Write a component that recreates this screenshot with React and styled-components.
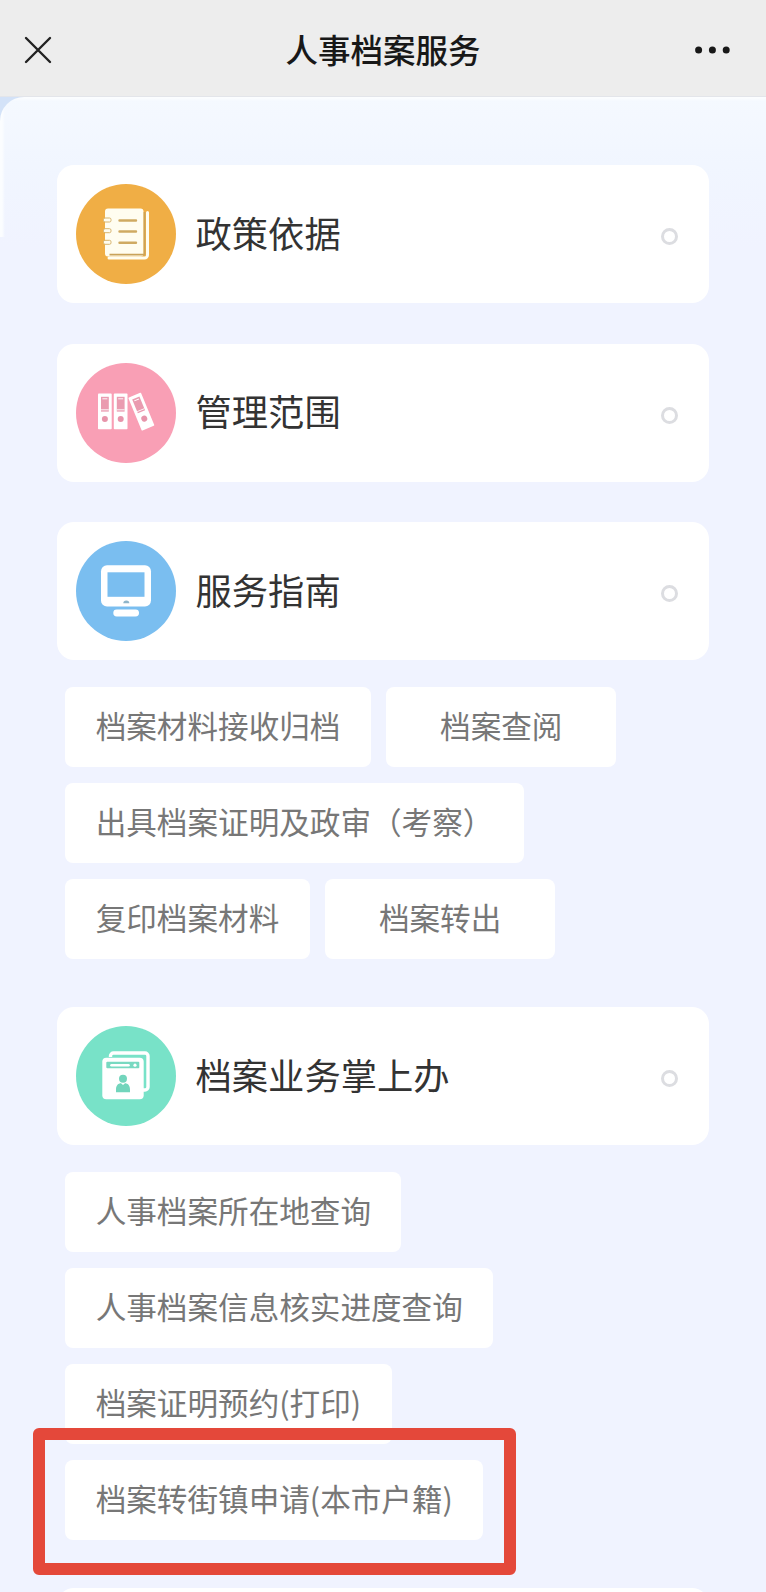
import React from "react";
import styled, { createGlobalStyle } from "styled-components";

const GlobalStyle = createGlobalStyle`
  * {
    box-sizing: border-box;
  }

  body {
    margin: 0;
    background-color: #f0f3ff;
    font-family: "Noto Sans CJK SC", sans-serif;
  }
`;

const StPage = styled.div`
  width: 766px;
  height: 1592px;
  overflow: hidden;
  background-color: #d3e2f8;
`;

const StHeader = styled.header`
  height: 97px;
  padding: 3px 36px 0 24px;
  display: grid;
  grid-template-columns: 1fr auto 1fr;
  align-items: center;
  background-color: #ededed;
  border-bottom: 1px solid #e3e5ea;
`;

const StHeaderTitle = styled.h1`
  margin: 0 -6px 0 6px;
  padding-bottom: 2px;
  font-size: 32.5px;
  font-weight: 500;
  line-height: 46px;
  color: #181818;
`;

const StHeaderButton = styled.button`
  padding: 0;
  display: flex;
  justify-self: ${({ $side }) => $side};
  border: none;
  background: none;
`;

const StContent = styled.main`
  height: 1495px;
  padding: 68.3px 57px 0;
  border-top-left-radius: 24px;
  background:
    linear-gradient(90deg, #fbfdff 2px, transparent) 0 0 / 5px 140px no-repeat,
    linear-gradient(#fbfdff 1px, transparent) 0 0 / 100% 4px no-repeat,
    linear-gradient(#f5f9ff 0, #f1f6ff 68px, #f0f3ff 150px);
`;

const StSection = styled.section`
  margin-bottom: ${({ $open }) => ($open ? "48px" : "40.4px")};
`;

const StCard = styled.div`
  height: 138px;
  padding: 0 31px 0 19px;
  display: flex;
  align-items: center;
  border-radius: 17px;
  background-color: #fff;
`;

const StCardIcon = styled.svg`
  width: 100px;
  height: 100px;
  flex-shrink: 0;
`;

const StCardTitle = styled.h2`
  margin: 0 auto 0 19.5px;
  padding-bottom: 5px;
  font-size: 36.3px;
  font-weight: 400;
  line-height: 54px;
  color: #333;
`;

const StRing = styled.span`
  width: 17px;
  height: 17px;
  margin-top: 5px;
  border: 3px solid #dcdde1;
  border-radius: 50%;
`;

const StTagList = styled.ul`
  margin: 26.8px 0 0;
  padding: 0 0 0 8.3px;
  display: flex;
  flex-wrap: wrap;
  gap: 15.6px;
  list-style: none;
`;

const StTag = styled.li`
  position: relative;
  min-width: 229.7px;
  height: 80.4px;
  padding: 0 30.4px 4.5px;
  display: flex;
  justify-content: center;
  align-items: center;
  border-radius: 8px;
  background-color: #fff;
  font-size: 30.6px;
  line-height: 44px;
  white-space: nowrap;
  color: #777;
`;

const StMark = styled.span`
  position: absolute;
  top: -32px;
  right: -32.5px;
  bottom: -34.5px;
  left: -32.3px;
  border: 12px solid #e4483a;
  border-radius: 6px;
`;

const NotebookIcon = () => (
  <StCardIcon viewBox="0 0 100 100">
    <circle cx="50" cy="50" r="50" fill="#f0ae45" />
    <path
      d="M71.5 28.5V71a3 3 0 0 1-3 3H33"
      fill="none"
      stroke="#fffdf0"
      strokeWidth="3"
      strokeLinecap="round"
    />
    <rect x="29" y="24.5" width="38.5" height="48" rx="3" fill="#fffdf0" />
    <path d="M68.5 28V70.7H33.5" fill="none" stroke="#c9a35a" strokeWidth="1.7" />
    <path
      d="M43.5 36.5H60M43.5 47.5H60M43.5 58.7H60"
      stroke="#cfaa62"
      strokeWidth="2.4"
      strokeLinecap="round"
    />
    <g fill="#fffdf0" stroke="#d7b46e" strokeWidth="1">
      <rect x="27.5" y="34" width="7.5" height="4" rx="1.5" />
      <rect x="27.5" y="44.7" width="7.5" height="4" rx="1.5" />
      <rect x="27.5" y="56.3" width="7.5" height="4" rx="1.5" />
    </g>
  </StCardIcon>
);

const Binder = ({ transform }) => (
  <g transform={transform}>
    <rect width="13.7" height="35.6" rx="0.8" fill="#fff" />
    <rect x="3" y="3.2" width="7.8" height="14.8" fill="#ea9bb0" />
    <path d="M4.4 5.2H9.4M3 16.2H10.8" stroke="#fff" strokeWidth="0.9" />
    <circle cx="6.9" cy="25.4" r="3" fill="#e794aa" />
  </g>
);

const BinderIcon = () => (
  <StCardIcon viewBox="0 0 100 100">
    <circle cx="50" cy="50" r="50" fill="#f99fb5" />
    <Binder transform="translate(22 30.6)" />
    <Binder transform="translate(37.8 30.6)" />
    <Binder transform="translate(52.2 34.8) rotate(-22.5)" />
  </StCardIcon>
);

const MonitorIcon = () => (
  <StCardIcon viewBox="0 0 100 100">
    <circle cx="50" cy="50" r="50" fill="#7abef0" />
    <rect x="25" y="24.3" width="50" height="41.3" rx="6" fill="#fff" />
    <rect x="31.5" y="31.3" width="37" height="24.5" fill="#7abef0" />
    <path d="M47.3 62.3a3 2.8 0 0 1 6 0z" fill="#8fb5c9" />
    <rect x="37.3" y="68.4" width="25.7" height="7" rx="3.4" fill="#fff" />
  </StCardIcon>
);

const ArchiveIcon = () => (
  <StCardIcon viewBox="0 0 100 100">
    <circle cx="50" cy="50" r="50" fill="#78e2c8" />
    <path
      d="M34.5 31V30a3 3 0 0 1 3-3H69a3 3 0 0 1 3 3V61a3 3 0 0 1-3 3H67"
      fill="none"
      stroke="#fff"
      strokeWidth="3.4"
    />
    <rect x="26.3" y="31.7" width="41.4" height="41.6" rx="4" fill="#fff" />
    <rect x="30.3" y="35.8" width="33" height="6.4" rx="1" fill="#78d9c1" />
    <path d="M35.5 39.2H52.5" stroke="#fff" strokeWidth="2.6" strokeLinecap="round" />
    <circle cx="59" cy="39.2" r="1.6" fill="#fff" />
    <circle cx="47" cy="52.8" r="4" fill="#72d5bc" />
    <path
      d="M40 66.3v-2.6c0-4.4 2.4-6.4 5-6.4l2 1.7 2-1.7c2.6 0 5 2 5 6.4v2.6z"
      fill="#72d5bc"
    />
  </StCardIcon>
);

const sections = [
  { title: "政策依据", Icon: NotebookIcon, tags: [] },
  { title: "管理范围", Icon: BinderIcon, tags: [] },
  {
    title: "服务指南",
    Icon: MonitorIcon,
    tags: [
      { name: "档案材料接收归档" },
      { name: "档案查阅" },
      { name: "出具档案证明及政审（考察）" },
      { name: "复印档案材料" },
      { name: "档案转出" },
    ],
  },
  {
    title: "档案业务掌上办",
    Icon: ArchiveIcon,
    tags: [
      { name: "人事档案所在地查询" },
      { name: "人事档案信息核实进度查询" },
      { name: "档案证明预约(打印)" },
      { name: "档案转街镇申请(本市户籍)", marked: true },
    ],
  },
];

const App = () => {
  return (
    <StPage>
      <GlobalStyle />
      <StHeader>
        <StHeaderButton $side="start" aria-label="关闭">
          <svg width="28" height="28" viewBox="0 0 28 28">
            <path
              d="M2 2L26 26M26 2L2 26"
              stroke="#222"
              strokeWidth="2.4"
              strokeLinecap="round"
            />
          </svg>
        </StHeaderButton>
        <StHeaderTitle>人事档案服务</StHeaderTitle>
        <StHeaderButton $side="end" aria-label="更多">
          <svg width="35" height="8" viewBox="0 0 35 8" fill="#181818">
            <circle cx="3.6" cy="4" r="3.5" />
            <circle cx="17.4" cy="4" r="3.5" />
            <circle cx="31.2" cy="4" r="3.5" />
          </svg>
        </StHeaderButton>
      </StHeader>
      <StContent>
        {sections.map(({ title, Icon, tags }) => (
          <StSection key={title} $open={tags.length > 0}>
            <StCard>
              <Icon />
              <StCardTitle>{title}</StCardTitle>
              <StRing />
            </StCard>
            {tags.length > 0 && (
              <StTagList>
                {tags.map((tag) => (
                  <StTag key={tag.name}>
                    {tag.name}
                    {tag.marked && <StMark />}
                  </StTag>
                ))}
              </StTagList>
            )}
          </StSection>
        ))}
        {/* top edge of the next card, cut off by the screen */}
        <StCard />
      </StContent>
    </StPage>
  );
};

export default App;
